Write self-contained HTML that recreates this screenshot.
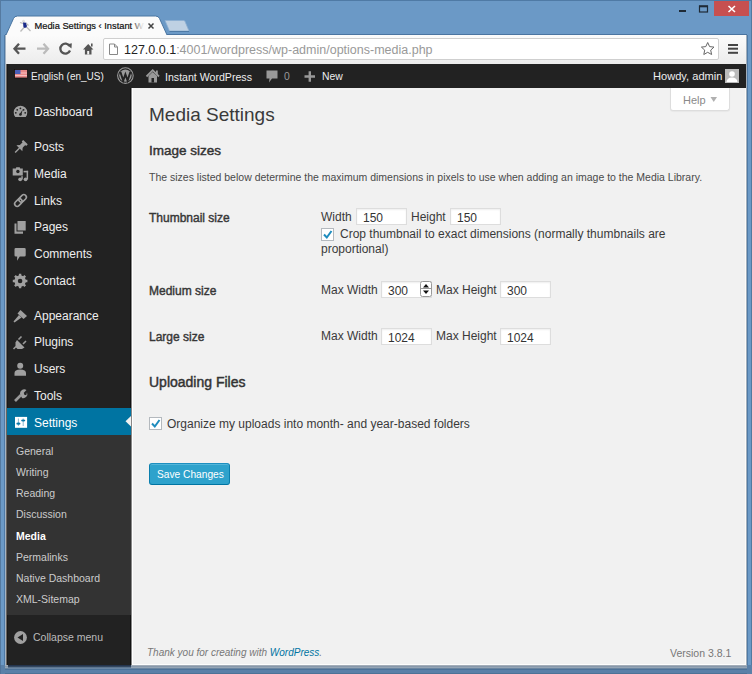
<!DOCTYPE html>
<html><head><meta charset="utf-8">
<style>
*{margin:0;padding:0;box-sizing:border-box}
html,body{width:752px;height:674px;overflow:hidden;background:#6b99c6;font-family:"Liberation Sans",sans-serif}
.a{position:absolute;white-space:nowrap}
svg{position:absolute;overflow:visible}
.menu{color:#eee;font-size:12px}
.sm{color:#ccc;font-size:10.5px}
.c{color:#3a3a3a}
.inp{position:absolute;height:17px;border:1px solid #ddd;background:#fff;font-size:12px;color:#333;padding-left:6px;line-height:19px;box-shadow:inset 0 1px 2px rgba(0,0,0,.07)}
.ab{color:#eee;font-size:11.5px}
</style></head><body>
<!-- window frame -->
<div class="a" style="left:0;top:0;width:752px;height:1px;background:#4f7aa5"></div>
<div class="a" style="left:0;top:0;width:1px;height:674px;background:#557aa0"></div>
<div class="a" style="left:751px;top:0;width:1px;height:674px;background:#527aa0"></div>
<div class="a" style="left:4px;top:35px;width:1px;height:630px;background:#4f7aa6"></div>
<div class="a" style="left:747px;top:35px;width:1px;height:630px;background:#4e7aa6"></div>
<div class="a" style="left:746px;top:35px;width:1px;height:630px;background:#a0adba"></div>
<!-- window controls -->
<div class="a" style="left:714px;top:1px;width:35px;height:15px;background:#c75050"></div>
<svg style="left:0;top:0" width="752" height="20">
  <path d="M728.5 6 L735 12 M735 6 L728.5 12" stroke="#fff" stroke-width="1.6"/>
  <rect x="679" y="10" width="7" height="2" fill="#1e2a36"/>
  <rect x="699.5" y="6" width="8" height="6" fill="none" stroke="#1e2a36" stroke-width="1.2"/>
  <rect x="699" y="5.5" width="9" height="1.8" fill="#1e2a36"/>
</svg>
<div class="a" style="left:5px;top:34px;width:742px;height:1px;background:#4a74a0"></div>
<!-- tab -->
<svg style="left:0;top:0" width="200" height="40">
  <path d="M5.5 36 L13.5 18.5 Q14.5 16 17.5 16 L155.5 16 Q158.5 16 159.5 18.5 L167.5 36 Z" fill="#fbfbfb" stroke="#4a76a2" stroke-width="1"/>
  <path d="M169.5 31 L165 20.5 L183.5 20.5 Q184.5 20.5 185 21.5 L189 31 Z" fill="#bfd1e3" stroke="#8eb0d2" stroke-width="0.8"/><path d="M169.5 31.5 L189 31.5" stroke="#4e7aa6" stroke-width="1"/>
</svg>
<!-- favicon -->
<svg style="left:18px;top:19px" width="14" height="14" viewBox="0 0 14 14">
  <circle cx="5.5" cy="2.3" r="1.5" fill="#ddd"/>
  <path d="M5 3.5 L8.5 3.8 L9 8.5 L5.5 9 Z" fill="#1a2a8a"/>
  <path d="M5 4.5 L2 3.5 M6 8.5 L2.5 12.5 M8.5 8 L12.5 12 M8.3 4.5 L10.5 6.5" stroke="#bbb" stroke-width="1.3"/>
</svg>
<div class="a" style="left:34.5px;top:21px;font-size:9.3px;color:#111;-webkit-text-stroke:0.2px #111">Media Settings ‹ Instant W</div>
<div class="a" style="left:131px;top:17px;width:14px;height:16px;background:linear-gradient(90deg,rgba(251,251,251,0),rgba(251,251,251,.9) 80%)"></div>
<svg style="left:0;top:0" width="200" height="40">
  <path d="M148.5 23.5 L153.5 28.5 M153.5 23.5 L148.5 28.5" stroke="#444" stroke-width="1.5"/>
</svg>

<!-- toolbar -->
<div class="a" style="left:5px;top:35px;width:1px;height:630px;background:#a4b4c4"></div>
<div class="a" style="left:6px;top:35px;width:740px;height:29px;background:linear-gradient(#fbfbfb,#f2f2f2 60%,#ececec)"></div>
<div class="a" style="left:103px;top:38px;width:616px;height:22px;background:#fff;border:1px solid #cfcfcf;border-radius:2px"></div>
<svg style="left:0;top:35px" width="752" height="28">
  <!-- back -->
  <path d="M14.5 13.7 L25.5 13.7 M19 8.7 L14.5 13.7 L19 18.7" stroke="#555" stroke-width="2.3" fill="none" stroke-linejoin="miter"/>
  <!-- forward -->
  <path d="M37 13.7 L48 13.7 M43.5 8.7 L48 13.7 L43.5 18.7" stroke="#bbb" stroke-width="2.3" fill="none"/>
  <!-- reload -->
  <path d="M69.6 11 A5 5 0 1 0 70 15.5" stroke="#555" stroke-width="2.3" fill="none"/>
  <path d="M66.5 9.5 L71.8 8.3 L71.5 13.5 Z" fill="#555"/>
  <!-- home -->
  <path d="M83 14.5 L88.2 9 L93.4 14.5 L91.5 14.5 L91.5 19.5 L84.9 19.5 L84.9 14.5 Z" fill="#555"/>
  <rect x="91" y="8.5" width="1.6" height="3" fill="#555"/>
  <rect x="87.2" y="16" width="2" height="3.5" fill="#f4f4f4"/>
  <!-- page icon -->
  <path d="M109.5 9 L114.5 9 L117.5 12 L117.5 19.5 L109.5 19.5 Z" fill="#fff" stroke="#888" stroke-width="1"/>
  <path d="M114.5 9 L114.5 12 L117.5 12" fill="none" stroke="#888" stroke-width="1"/>
  <!-- star -->
  <path d="M707.7 7.5 L709.6 11.6 L714 12.1 L710.7 15.1 L711.6 19.5 L707.7 17.3 L703.8 19.5 L704.7 15.1 L701.4 12.1 L705.8 11.6 Z" fill="#fff" stroke="#666" stroke-width="1"/>
  <!-- menu -->
  <rect x="728" y="9" width="10" height="2" fill="#444"/>
  <rect x="728" y="12.7" width="10" height="2" fill="#444"/>
  <rect x="728" y="16.8" width="10" height="2" fill="#444"/>
</svg>
<div class="a" style="left:124px;top:43px;font-size:12.5px;color:#222">127.0.0.1<span style="color:#999">:4001/wordpress/wp-admin/options-media.php</span></div>

<!-- admin bar -->
<div class="a" style="left:6px;top:64px;width:1px;height:601px;background:#6b6560"></div><div class="a" style="left:7px;top:64px;width:1px;height:601px;background:#1a1a1a"></div>
<div class="a" style="left:8px;top:64px;width:738px;height:24px;background:#222"></div>
<svg style="left:0;top:63px" width="752" height="25">
  <!-- flag -->
  <rect x="14.5" y="6.5" width="13" height="8.5" fill="#e88a8a" stroke="#111" stroke-width="0.8"/>
  <path d="M15 10 L27 10 M15 12.5 L27 12.5" stroke="#f6c0c0" stroke-width="1"/>
  <rect x="15" y="7" width="5.5" height="4" fill="#4a5fb8"/>
  <!-- wp logo -->
  <circle cx="125.4" cy="12.6" r="7.8" fill="none" stroke="#999" stroke-width="1.1"/>
  <circle cx="125.4" cy="12.6" r="6.2" fill="#999"/>
  <path d="M120.3 8.8 L123.2 17.5 L125.4 11.5 L127.6 17.5 L130.5 8.8" stroke="#222" stroke-width="2" fill="none"/>
  <!-- home -->
  <path d="M146.5 13.5 L152.7 7.2 L159 13.5" stroke="#999" stroke-width="1.8" fill="none"/>
  <path d="M148.5 13 L152.7 9 L157 13 L157 19.5 L148.5 19.5 Z" fill="#999"/>
  <rect x="156" y="7.5" width="1.8" height="3.5" fill="#999"/>
  <rect x="151.5" y="15" width="2.5" height="4.5" fill="#222"/>
  <!-- comment -->
  <path d="M266.5 7.5 L277.5 7.5 L277.5 15.5 L272 15.5 L269 19.5 L269.5 15.5 L266.5 15.5 Z" fill="#999"/>
  <!-- plus -->
  <path d="M304.5 13.5 L315 13.5 M309.8 8.2 L309.8 18.8" stroke="#999" stroke-width="2.4"/>
  <!-- avatar -->
  <rect x="725" y="6" width="14" height="14" fill="#bbb"/>
  <circle cx="732" cy="11" r="2.8" fill="#fff"/>
  <path d="M726.5 19 Q727 14.5 732 14.5 Q737 14.5 737.5 19 Z" fill="#fff"/>
</svg>
<div class="a ab" style="left:31px;top:71px;font-size:10px">English (en_US)</div>
<div class="a ab" style="left:165px;top:71px;font-size:10.6px">Instant WordPress</div>
<div class="a ab" style="left:284px;top:71px;font-size:10.4px;color:#999">0</div>
<div class="a ab" style="left:322px;top:71px;font-size:10.4px">New</div>
<div class="a ab" style="left:653px;top:70px;font-size:11.1px">Howdy, admin</div>

<!-- sidebar -->
<div class="a" style="left:8px;top:88px;width:122px;height:577px;background:#222"></div><div class="a" style="left:130px;top:88px;width:1px;height:577px;background:#111"></div>
<div class="a" style="left:7px;top:435px;width:124px;height:180px;background:#333"></div>
<div class="a menu" style="left:34px;top:105px">Dashboard</div>
<div class="a menu" style="left:34px;top:140px">Posts</div>
<div class="a menu" style="left:34px;top:167px">Media</div>
<div class="a menu" style="left:34px;top:194px">Links</div>
<div class="a menu" style="left:34px;top:220px">Pages</div>
<div class="a menu" style="left:34px;top:247px">Comments</div>
<div class="a menu" style="left:34px;top:274px">Contact</div>
<div class="a menu" style="left:34px;top:309px">Appearance</div>
<div class="a menu" style="left:34px;top:335px">Plugins</div>
<div class="a menu" style="left:34px;top:362px">Users</div>
<div class="a menu" style="left:34px;top:389px">Tools</div>
<div class="a" style="left:7px;top:408px;width:124px;height:27px;background:#0074a2"></div>
<div class="a menu" style="left:34px;top:416px;color:#fff">Settings</div>
<div class="a sm" style="left:16px;top:445px">General</div>
<div class="a sm" style="left:16px;top:466px">Writing</div>
<div class="a sm" style="left:16px;top:487px">Reading</div>
<div class="a sm" style="left:16px;top:508px">Discussion</div>
<div class="a sm" style="left:16px;top:530px;color:#fff;font-weight:bold">Media</div>
<div class="a sm" style="left:16px;top:551px">Permalinks</div>
<div class="a sm" style="left:16px;top:572px">Native Dashboard</div>
<div class="a sm" style="left:16px;top:593px">XML-Sitemap</div>
<div class="a sm" style="left:33px;top:631px;color:#bbb">Collapse menu</div>
<svg id="icons" style="left:0;top:0" width="140" height="674">
  <g fill="#a0a0a0">
  <!-- dashboard gauge -->
  <path d="M15.3 116.9 A6.8 6.8 0 1 1 25.7 116.9 Z"/>
  </g>
  <g fill="#222">
  <circle cx="20.4" cy="108.3" r="0.9"/><circle cx="17.2" cy="109.8" r="0.9"/><circle cx="23.6" cy="109.8" r="0.9"/><circle cx="15.8" cy="112.8" r="0.9"/><circle cx="25.2" cy="112.8" r="0.9"/>
  <path d="M19.6 114.3 L22.8 109.3 L21.3 115 Z"/>
  <circle cx="20.4" cy="114.5" r="1.3"/>
  </g>
  <g fill="#a0a0a0">
  <!-- pin -->
  <g transform="translate(20.3 147.3) rotate(45)">
    <rect x="-3.2" y="-7.3" width="6.4" height="2.2" rx="0.4"/>
    <rect x="-1.9" y="-5.5" width="3.8" height="4.5"/>
    <path d="M-1.9 -1.5 L1.9 -1.5 L4.2 1.3 L-4.2 1.3 Z"/>
    <rect x="-0.7" y="1" width="1.4" height="6.3"/>
  </g>
  <!-- media -->
  <path d="M12.7 168.5 L15.8 168.5 L16.3 167.3 L19.7 167.3 L20.2 168.5 L22.8 168.5 L22.8 175.6 L12.7 175.6 Z"/>
  <rect x="23.6" y="170.8" width="4.5" height="1.6"/>
  <rect x="26.6" y="170.8" width="1.5" height="8.6"/>
  <rect x="21.3" y="176.2" width="1.5" height="3.2"/>
  <circle cx="20.2" cy="179.3" r="1.9"/><circle cx="25.6" cy="179.3" r="1.9"/>
  <!-- links -->
  <g transform="rotate(-45 20.5 200.5)" fill="none" stroke="#a0a0a0" stroke-width="1.6">
    <rect x="13.3" y="198" width="8.5" height="5" rx="2.5"/>
    <rect x="19.2" y="198" width="8.5" height="5" rx="2.5"/>
  </g>
  <!-- pages -->
  <path d="M14.5 223.5 L16.5 223.5 L16.5 231.5 L23 231.5 L23 233.7 L14.5 233.7 Z"/>
  <path d="M17.5 221 L25.7 221 L25.7 230.5 L17.5 230.5 Z"/>
  <!-- comments -->
  <path d="M15.8 248 L24.4 248 Q25.7 248 25.7 249.3 L25.7 255.2 Q25.7 256.5 24.4 256.5 L19.8 256.5 L17 260.7 L17.2 256.5 L15.8 256.5 Q14.5 256.5 14.5 255.2 L14.5 249.3 Q14.5 248 15.8 248 Z"/>
  <!-- contact gear -->
  <path d="M18.88 275.53 L18.92 273.69 L21.28 273.69 L21.32 275.53 L23.10 276.27 L24.43 275.00 L26.10 276.67 L24.83 278.00 L25.57 279.78 L27.41 279.82 L27.41 282.18 L25.57 282.22 L24.83 284.00 L26.10 285.33 L24.43 287.00 L23.10 285.73 L21.32 286.47 L21.28 288.31 L18.92 288.31 L18.88 286.47 L17.10 285.73 L15.77 287.00 L14.10 285.33 L15.37 284.00 L14.63 282.22 L12.79 282.18 L12.79 279.82 L14.63 279.78 L15.37 278.00 L14.10 276.67 L15.77 275.00 L17.10 276.27 Z"/>
  <circle cx="20.1" cy="281.0" r="5.6"/>
  <!-- appearance brush -->
  <path d="M20.5 310 L27 316 L23.5 319 L17.5 313.5 Z"/>
  <path d="M19 315 L21.5 317.5 L14.5 322.5 L13.5 321.5 Z"/>
  <!-- plugins -->
  <path d="M21.5 336.5 L18.5 339.5 M26 341 L23 344" stroke="#999" stroke-width="1.6"/>
  <path d="M17 340 L24.5 347.5 L22 349 L17.5 349 L15.5 347 L15.5 342.5 Z"/>
  <path d="M16 346.5 L13.5 349" stroke="#999" stroke-width="1.6"/>
  <!-- users -->
  <circle cx="20.2" cy="365.8" r="3"/>
  <path d="M14.5 375.7 L14.5 373 Q14.5 369.5 20.2 369.5 Q26 369.5 26 373 L26 375.7 Z"/>
  <!-- tools wrench -->
  <path d="M15 401 L21 395 M14.5 401.5" stroke="#999" stroke-width="2.6"/>
  <path d="M20 394 A4.2 4.2 0 0 1 26.5 390 L23.8 392.7 L24.3 394.7 L26.3 395.2 L27 392.3 A4.2 4.2 0 0 1 22 398 Z"/>
  <!-- collapse -->
  <circle cx="20.5" cy="637.5" r="6.4"/>
  </g>
  <path d="M23 634 L23 641 L17.5 637.5 Z" fill="#222"/>
  <circle cx="20.1" cy="281" r="2.3" fill="#222"/>
  <circle cx="17.9" cy="171.5" r="1.7" fill="#222"/>
  <!-- settings icon -->
  <rect x="15" y="416.9" width="12.1" height="10.9" fill="#fff"/>
  <path d="M18.4 418.5 L18.4 426 M23.2 418.5 L23.2 426" stroke="#7ab0cc" stroke-width="0.9"/>
  <ellipse cx="18.4" cy="423.7" rx="2.1" ry="1.1" fill="#0a78a8"/>
  <ellipse cx="23.2" cy="420.5" rx="2.1" ry="1.1" fill="#0a78a8"/>
  <!-- settings arrow -->
  <path d="M131.5 415.5 L125.5 421.3 L131.5 427 Z" fill="#f1f1f1"/>
</svg>

<!-- content -->
<div class="a" style="left:131px;top:88px;width:1px;height:577px;background:#888"></div><div class="a" style="left:132px;top:88px;width:1px;height:577px;background:#fff"></div>
<div class="a" style="left:133px;top:88px;width:612px;height:576px;background:#f1f1f1"></div><div class="a" style="left:133px;top:664px;width:612px;height:1px;background:#fdfdfd"></div><div class="a" style="left:745px;top:88px;width:1px;height:577px;background:#fdfbf8"></div>
<div class="a" style="left:670px;top:88px;width:60px;height:23px;background:#fff;border:1px solid #ddd;border-top:0;border-radius:0 0 3px 3px;box-shadow:0 1px 1px rgba(0,0,0,.04)"></div>
<div class="a" style="left:683px;top:94px;font-size:11px;color:#8a8a8a">Help</div>
<svg style="left:0;top:0" width="752" height="120"><path d="M710.5 97 L717 97 L713.75 102 Z" fill="#b0b0b0"/></svg>

<div class="a c" style="left:149px;top:104px;font-size:19px">Media Settings</div>
<div class="a c" style="left:149px;top:143px;font-size:13.5px;-webkit-text-stroke:0.45px #333;color:#333">Image sizes</div>
<div class="a c" style="left:149px;top:171px;font-size:10.5px;color:#4a4a4a">The sizes listed below determine the maximum dimensions in pixels to use when adding an image to the Media Library.</div>
<div class="a c" style="left:149px;top:211px;font-size:12px;-webkit-text-stroke:0.4px #333">Thumbnail size</div>
<div class="a c" style="left:321px;top:210px;font-size:12px">Width</div>
<div class="inp" style="left:356px;top:208px;width:51px">150</div>
<div class="a c" style="left:411px;top:210px;font-size:12px">Height</div>
<div class="inp" style="left:450px;top:208px;width:51px">150</div>
<div class="a c" style="left:340px;top:227px;font-size:12px">Crop thumbnail to exact dimensions (normally thumbnails are</div>
<div class="a c" style="left:321px;top:242px;font-size:12px">proportional)</div>
<div class="a c" style="left:149px;top:284px;font-size:12px;-webkit-text-stroke:0.4px #333">Medium size</div>
<div class="a c" style="left:321px;top:283px;font-size:12px">Max Width</div>
<div class="inp" style="left:381px;top:281px;width:51px">300</div>
<div class="a c" style="left:436px;top:283px;font-size:12px">Max Height</div>
<div class="inp" style="left:500px;top:281px;width:51px">300</div>
<div class="a c" style="left:149px;top:330px;font-size:12px;-webkit-text-stroke:0.4px #333">Large size</div>
<div class="a c" style="left:321px;top:329px;font-size:12px">Max Width</div>
<div class="inp" style="left:381px;top:328px;width:51px">1024</div>
<div class="a c" style="left:436px;top:329px;font-size:12px">Max Height</div>
<div class="inp" style="left:500px;top:328px;width:51px">1024</div>
<div class="a c" style="left:149px;top:374px;font-size:14px;-webkit-text-stroke:0.45px #333;color:#333">Uploading Files</div>
<div class="a c" style="left:167px;top:417px;font-size:12px">Organize my uploads into month- and year-based folders</div>
<svg style="left:0;top:0" width="752" height="500">
  <!-- checkboxes -->
  <rect x="321.5" y="228.5" width="12" height="12" fill="#fff" stroke="#b4b9be"/>
  <path d="M324 234.5 L326.8 237.5 L331.5 231" stroke="#1e8cbe" stroke-width="2" fill="none"/>
  <rect x="149.5" y="417.5" width="12" height="12" fill="#fff" stroke="#b4b9be"/>
  <path d="M152 423.5 L154.8 426.5 L159.5 420" stroke="#1e8cbe" stroke-width="2" fill="none"/>
  <!-- spinner -->
  <rect x="420.5" y="281.5" width="11" height="15" rx="2" fill="#fff" stroke="#999"/>
  <path d="M420.5 288.5 L431.5 288.5" stroke="#999"/>
  <path d="M423 287.5 L426 284 L429 287.5 Z M423 290.5 L426 294 L429 290.5 Z" fill="#111"/>
</svg>
<div class="a" style="left:149px;top:463px;width:81px;height:22px;background:#2ea2cc;border:1px solid #0074a2;border-color:#1d8fc0 #0a7fae #0074a2;border-radius:3px;box-shadow:inset 0 1px 0 rgba(120,200,230,.5)"></div>
<div class="a" style="left:157px;top:469px;font-size:10.2px;color:#fff">Save Changes</div>
<div class="a" style="left:147px;top:647px;font-size:10px;color:#777;font-style:italic">Thank you for creating with <span style="color:#0074a2">WordPress</span>.</div>
<div class="a" style="left:670px;top:647px;font-size:10.5px;color:#777">Version 3.8.1</div>

<!-- bottom frame -->
<div class="a" style="left:0;top:665px;width:752px;height:9px;background:linear-gradient(#a3adb8 0,#a3adb8 1px,#8798ab 1px,#8798ab 2px,#95a5b5 2px,#95a5b5 3px,#6a85a1 3px,#6a85a1 4px,#4d7298 4px,#4d7298 5px,#5a80a8 5px,#5a80a8 8px,#4d7296 8px)"></div>
<div class="a" style="left:8px;top:665px;width:123px;height:4px;background:linear-gradient(#24344d 0,#24344d 1px,#33475f 1px,#33475f 2px,#5d7590 2px,#5d7590 3px,#6a86a3 3px)"></div>
<div class="a" style="left:0;top:665px;width:5px;height:9px;background:#5a80a8"></div>
<div class="a" style="left:0;top:665px;width:1px;height:9px;background:#50739a"></div>
<div class="a" style="left:747px;top:665px;width:5px;height:9px;background:#5a80a8"></div>
</body></html>
